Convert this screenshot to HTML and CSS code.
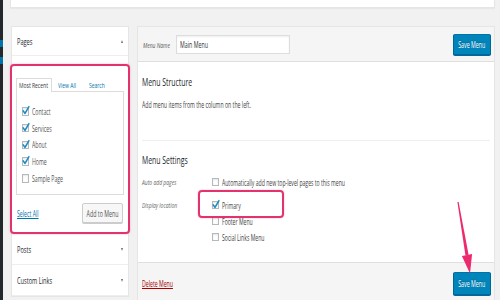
FILE: index.html
```html
<!DOCTYPE html>
<html>
<head>
<meta charset="utf-8">
<link rel="stylesheet" href="styles.css">
</head>
<body>
<div class="screen">
  <div class="strip"><span class="cur"></span><span class="cur"></span></div>
  <div class="content">
    <div class="topbox"></div>
    <div class="columns">
      <div class="side">
        <div class="acc-head"><span class="sq">Pages</span><i class="caret up"></i></div>
        <div class="acc-body">
          <div class="tabs">
            <span class="tab t1 active"><span class="sq">Most Recent</span></span>
            <span class="tab t2 link"><span class="sq">View All</span></span>
            <span class="tab t3 link"><span class="sq">Search</span></span>
          </div>
          <ul class="list">
            <li><span class="cb"><svg viewBox="0 0 10 10" preserveAspectRatio="none"><path d="M1.6 5.2 L4 7.8 L9.2 0.8"/></svg></span><span class="sq">Contact</span></li>
            <li><span class="cb"><svg viewBox="0 0 10 10" preserveAspectRatio="none"><path d="M1.6 5.2 L4 7.8 L9.2 0.8"/></svg></span><span class="sq">Services</span></li>
            <li><span class="cb"><svg viewBox="0 0 10 10" preserveAspectRatio="none"><path d="M1.6 5.2 L4 7.8 L9.2 0.8"/></svg></span><span class="sq">About</span></li>
            <li><span class="cb"><svg viewBox="0 0 10 10" preserveAspectRatio="none"><path d="M1.6 5.2 L4 7.8 L9.2 0.8"/></svg></span><span class="sq">Home</span></li>
            <li><span class="cb"></span><span class="sq">Sample Page</span></li>
          </ul>
          <div class="actions">
            <a class="link select-all"><span class="sq">Select All</span></a>
            <span class="btn add"><span class="sq">Add to Menu</span></span>
          </div>
          <div class="hl hl-pages"></div>
        </div>
        <div class="acc-head"><span class="sq">Posts</span><i class="caret down"></i></div>
        <div class="acc-head"><span class="sq">Custom Links</span><i class="caret down"></i></div>
      </div>
      <div class="main">
        <div class="bar">
          <span class="lbl name-lbl"><span class="sq">Menu Name</span></span>
          <span class="input"><span class="sq">Main Menu</span></span>
          <span class="btn primary top"><span class="sq">Save Menu</span></span>
        </div>
        <div class="body">
          <h3 class="h"><span class="sq">Menu Structure</span></h3>
          <p class="desc"><span class="sq">Add menu items from the column on the left.</span></p>
          <div class="rule"></div>
          <h3 class="h settings-h"><span class="sq">Menu Settings</span></h3>
          <div class="settings">
            <span class="lbl"><span class="sq">Auto add pages</span></span>
            <div class="opts">
              <div class="opt"><span class="cb"></span><span class="sq">Automatically add new top-level pages to this menu</span></div>
            </div>
            <span class="lbl"><span class="sq">Display location</span></span>
            <div class="opts">
              <div class="opt"><span class="cb"><svg viewBox="0 0 10 10" preserveAspectRatio="none"><path d="M1.6 5.2 L4 7.8 L9.2 0.8"/></svg></span><span class="sq">Primary</span></div>
              <div class="opt"><span class="cb"></span><span class="sq">Footer Menu</span></div>
              <div class="opt"><span class="cb"></span><span class="sq">Social Links Menu</span></div>
              <div class="hl hl-primary"></div>
            </div>
          </div>
        </div>
        <div class="foot">
          <a class="delete"><span class="sq">Delete Menu</span></a>
          <span class="btn primary bottom"><span class="sq">Save Menu</span></span>
        </div>
      </div>
    </div>
  </div>
</div>
<svg class="arrow" viewBox="0 0 30 85">
  <polygon points="7.4,7.1 8.6,6.9 18.6,59.8 15.4,60.3"/>
  <polygon points="11.9,60.9 22.1,59.1 20,78.5"/>
</svg>
</body>
</html>
```

FILE: styles.css
```css
html, body {
  margin: 0;
  padding: 0;
  background: #f1f1f1;
  overflow: hidden;
}

body {
  width: 500px;
  height: 300px;
  font-family: "Open Sans", "Noto Sans", sans-serif;
  color: #444;
}

/* text in the capture is squeezed horizontally */
.sq {
  display: inline-block;
  white-space: nowrap;
  transform: scaleX(0.625);
  transform-origin: 0 50%;
}

.screen {
  width: 500px;
  height: 300px;
  display: flex;
  background: #f1f1f1;
  overflow: hidden;
}

.strip {
  width: 2.5px;
  flex: none;
  background: #23282d;
  display: flex;
  flex-direction: column;
  padding-top: 40px;
  gap: 10px;
  box-sizing: border-box;
}

.strip .cur {
  display: block;
  height: 7px;
  background: #0073aa;
}

.content {
  flex: 1;
  min-width: 0;
  padding: 0 5px 0 7.5px;
}

.topbox {
  height: 7px;
  background: #fff;
  border: 1px solid #e5e5e5;
  border-top: 0;
  box-shadow: 0 1px 1px rgba(0, 0, 0, 0.04);
}

.columns {
  display: flex;
  align-items: flex-start;
  gap: 8px;
  margin-top: 18px;
}

/* ---------- left accordion ---------- */
.side {
  width: 118px;
  flex: none;
  margin-left: 1px;
  box-sizing: border-box;
  background: #fff;
  border: 1px solid #e5e5e5;
}

.acc-head {
  height: 30px;
  display: flex;
  align-items: center;
  justify-content: space-between;
  padding: 0 5px;
  font-size: 9px;
  color: #23282d;
  border-bottom: 1px solid #eee;
}

.acc-head:first-child {
  height: 28px;
}

.caret {
  width: 0;
  height: 0;
  border-left: 1.9px solid transparent;
  border-right: 1.9px solid transparent;
}

.caret.up { border-bottom: 3px solid #6b6f73; }
.caret.down { border-top: 3px solid #6b6f73; }

.acc-body {
  position: relative;
  height: 178px;
  box-sizing: border-box;
  padding: 22px 4px 0 4px;
  border-bottom: 1px solid #eee;
}

.tabs {
  display: flex;
  height: 13px;
  font-size: 8px;
  line-height: 12px;
}

.tab {
  display: block;
  box-sizing: border-box;
  padding-left: 2px;
  border: 1px solid transparent;
  border-bottom: 0;
}

.t1 { width: 36px; }
.t2 { width: 31px; margin-left: 3px; }
.t3 { width: 24px; }

.tab.active {
  color: #32373c;
  background: #fff;
  border-color: #dcdcdc;
  margin-bottom: -1px;
  position: relative;
  z-index: 1;
}

.link {
  color: #0073aa;
}

.list {
  list-style: none;
  margin: 0;
  height: 104px;
  box-sizing: border-box;
  padding: 11px 0 0 5px;
  border: 1px solid #dcdcdc;
  font-size: 8.3px;
  color: #555;
}

.list li {
  height: 16.75px;
  display: flex;
  align-items: center;
  gap: 3.6px;
}

.cb {
  display: block;
  width: 6.5px;
  height: 8.5px;
  flex: none;
  box-sizing: border-box;
  border: 1px solid #b4b9be;
  background: #fff;
  box-shadow: inset 0 1px 2px rgba(0, 0, 0, 0.1);
}

.cb svg {
  display: block;
  width: 7.5px;
  height: 9.5px;
  margin: -2px 0 0 -0.6px;
  overflow: visible;
}

.cb path {
  fill: none;
  stroke: #1e8cbe;
  stroke-width: 1.9;
  stroke-linecap: round;
  stroke-linejoin: round;
}

.actions {
  display: flex;
  align-items: center;
  justify-content: space-between;
  margin-top: 8px;
  padding: 0 1px;
  height: 20px;
}

.select-all {
  font-size: 8.3px;
}

.select-all .sq,
.delete .sq {
  text-decoration: underline;
}

.btn {
  display: flex;
  align-items: center;
  justify-content: center;
  height: 20px;
  box-sizing: border-box;
  font-size: 8.5px;
  color: #555;
  background: #f7f7f7;
  border: 1px solid #ccc;
  border-radius: 2px;
  box-shadow: 0 1px 0 #ccc;
}

.btn .sq {
  transform-origin: 50% 50%;
}

.btn.add {
  width: 41px;
}

.hl {
  position: absolute;
  box-sizing: border-box;
  border: 2px solid #e3336e;
  border-radius: 4px;
  box-shadow: 0 0 2px rgba(227, 51, 110, 0.35);
  pointer-events: none;
}

.hl-pages {
  left: -2px;
  top: 8px;
  width: 120px;
  height: 170px;
}

/* ---------- right panel ---------- */
.main {
  flex: 1;
  min-width: 0;
  background: #fff;
  border: 1px solid #e5e5e5;
  display: flex;
  flex-direction: column;
}

.bar {
  height: 34px;
  display: flex;
  align-items: center;
  padding: 0 3px 0 5px;
  background: #f5f5f5;
  border-bottom: 1px solid #dfdfdf;
}

.lbl {
  font-size: 8px;
  font-style: italic;
  color: #555;
}

.name-lbl {
  width: 33px;
  flex: none;
}

.input {
  width: 114px;
  height: 19px;
  flex: none;
  box-sizing: border-box;
  display: flex;
  align-items: center;
  padding-left: 2.5px;
  font-size: 8.5px;
  color: #32373c;
  background: #fff;
  border: 1px solid #ddd;
  box-shadow: inset 0 1px 2px rgba(0, 0, 0, 0.07);
}

.btn.primary {
  width: 38px;
  color: #fff;
  background: #0085ba;
  border-color: #0073aa #006799 #006799;
  box-shadow: 0 1px 0 #006799;
  text-shadow: 0 -1px 1px #006799;
}

.btn.top {
  margin-left: auto;
  height: 21px;
}

.btn.bottom {
  margin-left: auto;
  height: 23px;
}

.body {
  height: 200px;
  box-sizing: border-box;
  padding: 12px 4px 0 4px;
}

.h {
  margin: 0;
  font-size: 11px;
  line-height: 16px;
  font-weight: normal;
  color: #23282d;
}

.desc {
  margin: 8px 0 0;
  font-size: 8.3px;
  line-height: 14px;
  color: #444;
}

.rule {
  margin-top: 28px;
  border-top: 1px solid #eee;
}

.settings-h {
  margin-top: 11px;
}

.settings {
  display: grid;
  grid-template-columns: 70px 1fr;
  row-gap: 7px;
  margin-top: 6px;
}

.settings .lbl {
  line-height: 16px;
  color: #666;
}

.opts {
  position: relative;
}

.opt {
  height: 16px;
  display: flex;
  align-items: center;
  gap: 3.5px;
  font-size: 8.2px;
  color: #444;
}

.hl-primary {
  left: -14px;
  top: -7px;
  width: 86px;
  height: 28px;
}

.foot {
  height: 41px;
  flex: none;
  display: flex;
  align-items: center;
  padding: 0 3px 0 4px;
  background: #f5f5f5;
  border-top: 1px solid #dfdfdf;
}

.delete {
  font-size: 8.3px;
  color: #a00;
}

.arrow {
  position: absolute;
  left: 450px;
  top: 195px;
  width: 30px;
  height: 85px;
  fill: #ec2a6e;
}
```
